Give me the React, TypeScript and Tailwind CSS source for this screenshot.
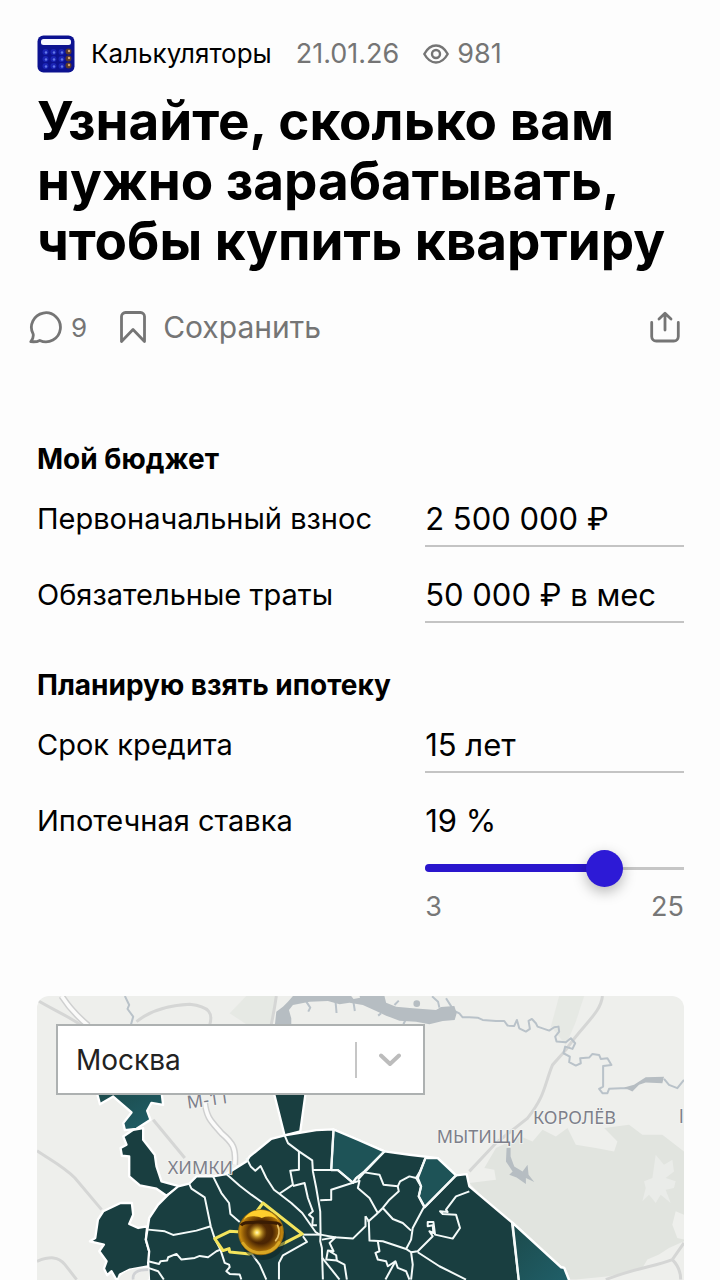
import { useState } from 'react';

const FONT = "font-['Inter','Noto_Sans',sans-serif]";

const CITIES = ['Москва', 'Санкт-Петербург', 'Казань', 'Екатеринбург'];

// District borders inside the city, drawn as plain polylines
const BORDERS = [
  // north-west
  '478,597 485,612 525,638 543,725 555,762 572,795 585,835 598,840 600,848 590,860 600,868 630,870 635,885',
  '355,735 405,740 430,751 500,738 543,725',
  '550,575 575,625 598,655 602,688 630,712',
  '590,568 630,603 665,630 700,655',
  '355,830 388,838 392,830 412,828 415,818 440,808 455,825 495,820 510,814 535,818 560,800 572,795',
  '355,850 385,860 402,885',
  '650,520 663,545 677,558 693,544 710,580 733,615 750,628 785,655 818,685 858,742 870,750',
  // north
  '765,452 775,475 808,500 848,527 850,560 860,610 872,680 873,750 872,770 877,790 878,825 880,885',
  '808,500 808,555 782,558 790,600 748,628',
  '790,604 825,595 835,640 850,680 838,690 850,700 848,722 862,722',
  '850,556 925,556 970,594 905,615 905,645 872,647',
  '912,434 905,555',
  '970,594 990,588 985,610 1020,640 1045,685',
  '1008,695 1008,725 970,762 915,758 873,750',
  '980,580 1010,558 1065,500',
  '985,585 1005,563 1050,570 1062,600 1105,605 1112,590 1140,575 1160,580 1172,560 1188,520',
  '1105,605 1108,620 1080,645 1060,670 1045,685',
  '1160,580 1175,605 1168,635 1185,665 1150,730 1145,765 1130,793',
  '1060,670 1090,703 1120,715 1145,738',
  '1280,572 1185,668',
  '1045,685 1015,712',
  // centre
  '820,750 873,750',
  '1008,695 1018,710 1020,768 1060,770 1130,793 1145,803 1150,840 1145,885',
  '1045,770 1050,800 1038,805 1045,825 1070,830 1075,845 1098,830 1105,850 1130,860 1140,885',
  '1098,830 1068,885',
  '1145,803 1165,800 1210,755 1200,740 1212,745 1210,722 1195,725 1195,712 1212,712 1217,750 1270,762 1292,730 1280,690 1240,688 1232,680 1255,682 1250,675 1280,635 1320,620',
  '1165,803 1230,845 1310,885',
  '877,765 918,758 900,775 912,800 895,798 890,825 922,828 920,812 900,800',
  '922,828 945,840 952,885',
  '878,820 930,885',
  '820,755 832,772 760,812 748,835 748,885',
  '660,800 690,840 710,885',
  '1448,715 1468,885',
];

const ROADS = [
  'M21 45 C70 75 110 90 160 125',
  'M320 110 C370 70 430 60 480 58 C540 65 550 85 540 120',
  'M21 498 C60 525 100 545 135 580 L215 675',
  'M21 830 C60 815 85 815 105 840 L140 885',
  'M370 405 L465 520',
  'M740 33 Q735 70 725 118',
  'M1720 33 C1715 85 1660 120 1610 195 L1570 240 C1545 300 1550 330 1495 400 L1400 475 L1320 560',
  'M1730 885 C1820 850 1880 845 1930 825 L1965 775 M1930 825 Q1955 850 1955 885',
];

const HIGHWAY = 'M95 33Q125 80 175 122M525 350C530 400 545 410 575 445C610 475 620 490 615 540';

function EyeIcon() {
  return (
    <svg viewBox="0 0 26 20" className="h-5 w-[26px]" fill="none" stroke="currentColor" strokeWidth="2.4" aria-hidden="true">
      <path d="M1.3 10C4.3 4.5 8.3 1.5 13 1.5S21.7 4.5 24.7 10C21.7 15.5 17.7 18.5 13 18.5S4.3 15.5 1.3 10Z" strokeLinejoin="round" />
      <circle cx="13" cy="10" r="4" />
    </svg>
  );
}

function CommentIcon() {
  return (
    <svg viewBox="0 0 34 34" className="size-[34px]" fill="none" stroke="currentColor" strokeWidth="2.8" strokeLinejoin="round" strokeLinecap="round" aria-hidden="true">
      <path d="M4.2 24.2A14.5 14.5 0 1 1 10.8 30.4C8.500 31.6 5.500 32 1.800 31.6C3.600 29.600 4.600 27.200 4.200 24.200Z" />
    </svg>
  );
}

function BookmarkIcon() {
  return (
    <svg viewBox="0 0 28 34" className="h-[34px] w-7" fill="none" stroke="currentColor" strokeWidth="2.8" strokeLinejoin="round" aria-hidden="true">
      <path d="M2.5 31.5V6.5A4 4 0 0 1 6.5 2.5H21.5A4 4 0 0 1 25.5 6.5V31.5L14 19.5Z" />
    </svg>
  );
}

function ShareIcon() {
  return (
    <svg viewBox="0 0 30 32" className="h-8 w-[30px]" fill="none" stroke="currentColor" strokeWidth="2.8" strokeLinecap="round" strokeLinejoin="round" aria-hidden="true">
      <path d="M1.7 11.5V25.5A4.5 4.5 0 0 0 6.2 30H23.8A4.5 4.5 0 0 0 28.3 25.5V11.5" />
      <path d="M15 19V2.5M9 8L15 2.2L21 8" />
    </svg>
  );
}

function CalculatorLogo() {
  const rows = [17, 24, 31];
  const cols = [9, 17, 25];
  return (
    <svg viewBox="0 0 38 38" className="size-[38px]" aria-hidden="true">
      <rect x="0.5" y="0.5" width="37" height="37" rx="6" fill="#0c1290" />
      <rect x="4" y="4" width="30" height="6" rx="2.5" fill="#f7f8ff" />
      {rows.map(y => (
        <g key={y}>
          {cols.map(x => (
            <g key={x}>
              <circle cx={x - 0.5} cy={y} r="3" fill="#1b25b5" />
              <circle cx={x} cy={y + 0.5} r="1.2" fill="#6278e8" />
            </g>
          ))}
          <circle cx="31.5" cy={y - 0.5} r="3" fill="#5b3a2a" />
          <circle cx="32" cy={y - 1} r="1.2" fill="#d3a372" />
        </g>
      ))}
    </svg>
  );
}

function Field({ id, label, defaultValue }: { id: string; label: string; defaultValue: string }) {
  return (
    <div className="grid grid-cols-[3fr_2fr] items-center">
      <label htmlFor={id} className="text-[29px] leading-9">{label}</label>
      <input
        id={id}
        type="text"
        defaultValue={defaultValue}
        className="h-14 w-full min-w-0 border-b-2 border-[#c4c4c4] bg-transparent text-[31px] outline-none"
      />
    </div>
  );
}

function RateSlider() {
  const [rate, setRate] = useState(19);
  const min = 3;
  const max = 25;
  const percent = ((rate - min) / (max - min)) * 100;

  return (
    <div className="grid grid-cols-[3fr_2fr]">
      <label htmlFor="rate" className="flex h-14 items-center text-[29px] leading-9">Ипотечная ставка</label>
      <div>
        <output htmlFor="rate" className="flex h-14 items-center text-[31px]">{rate} %</output>
        <div className="grid items-center">
          <div className="col-start-1 row-start-1 h-[3px] bg-[#c6c6c6]" />
          <div className="col-start-1 row-start-1 h-2 rounded-full bg-[#2a16cd]" style={{ width: `${percent}%` }} />
          <input
            id="rate"
            type="range"
            min={min}
            max={max}
            value={rate}
            onChange={e => setRate(Number(e.target.value))}
            className="col-start-1 row-start-1 h-[38px] w-full appearance-none bg-transparent [&::-webkit-slider-thumb]:size-[37px] [&::-webkit-slider-thumb]:appearance-none [&::-webkit-slider-thumb]:rounded-full [&::-webkit-slider-thumb]:bg-[#2d1ad6] [&::-webkit-slider-thumb]:shadow-[0_5px_14px_rgba(0,0,0,0.28)]"
          />
        </div>
        <div className="flex justify-between text-[27px] leading-10 text-[#777]">
          <span>{min}</span>
          <span>{max}</span>
        </div>
      </div>
    </div>
  );
}

function GoldBall() {
  return (
    <g>
      <ellipse cx="700" cy="760" rx="68" ry="66" fill="#0c2020" opacity="0.45" />
      <circle cx="694" cy="743" r="69" fill="url(#gold)" />
      <path d="M642 706C655 690 680 694 696 700C716 692 738 696 747 710C738 690 720 677 694 676C668 677 650 688 642 706Z" fill="#ffcf2e" />
      <path d="M634 722C644 708 668 716 694 712C720 716 744 708 754 724" fill="none" stroke="#3a1c03" strokeWidth="9" />
      <path d="M640 776C655 798 676 805 694 804C716 804 736 794 748 774" fill="none" stroke="#d8a624" strokeWidth="9" strokeLinecap="round" />
      <path d="M744 722C752 738 748 758 738 768" fill="none" stroke="#e9c26a" strokeWidth="5" strokeLinecap="round" />
      <circle cx="682" cy="744" r="30" fill="url(#glint)" />
    </g>
  );
}

function CityMap() {
  return (
    <svg viewBox="21 33 1944 852" className="block h-auto w-full bg-[#eeefec]" role="img" aria-label="Карта Москвы">
      <defs>
        <radialGradient id="gold">
          <stop offset="0" stopColor="#5a3204" />
          <stop offset="0.5" stopColor="#4a2403" />
          <stop offset="0.75" stopColor="#8f5a06" />
          <stop offset="0.92" stopColor="#c4880f" />
          <stop offset="1" stopColor="#8a6410" />
        </radialGradient>
        <radialGradient id="glint">
          <stop offset="0" stopColor="#fffbc8" />
          <stop offset="0.25" stopColor="#f4cf4a" />
          <stop offset="1" stopColor="#a86f08" stopOpacity="0" />
        </radialGradient>
        <linearGradient id="teal" x1="0" y1="0" x2="1" y2="1">
          <stop offset="0" stopColor="#1c4a4b" />
          <stop offset="1" stopColor="#20606a" />
        </linearGradient>
      </defs>

      {/* forests */}
      <g fill="#e1e4df">
        <path d="M1320 595L1400 585L1395 555L1365 550L1400 490L1475 455L1510 470L1540 435L1580 455L1615 430L1640 480L1700 490L1755 500L1765 470L1725 430L1800 420L1840 450L1900 450L1965 500V770L1920 790L1890 810L1855 825L1840 850L1740 875L1640 885H1600Z" />
        <path d="M1590 33H1665L1640 110L1610 180L1565 125Z" opacity="0.6" />
        <path d="M600 85L650 33H740L725 118H650Z" opacity="0.6" />
      </g>
      <path d="M1880 510L1905 540L1930 525L1935 560L1910 580L1940 590L1935 610L1910 615L1925 655L1895 630L1880 655L1860 630L1840 650L1850 610L1845 590L1870 580Z" fill="#eaece9" />
      <path d="M1965 690L1940 680L1930 720L1945 760L1965 765Z" fill="#eeefec" />

      {/* roads */}
      <g fill="none" stroke="#d5d6d5" strokeWidth="9">
        {ROADS.map(d => <path key={d} d={d} />)}
      </g>
      <path d={HIGHWAY} fill="none" stroke="#cfd0d0" strokeWidth="20" />
      <path d={HIGHWAY} fill="none" stroke="#fbfbfa" strokeWidth="11" />

      {/* water */}
      <g fill="none" stroke="#b9c2c9" strokeWidth="6" strokeLinejoin="round">
        <path d="M285 33L298 60L293 72L310 95L303 120" />
        <path d="M1275 78L1290 85L1300 97L1320 97L1345 98L1360 105L1400 108L1425 108L1435 122L1455 123L1463 105L1470 130L1490 140L1502 132L1498 108L1508 102L1520 115L1525 125L1560 137L1575 127L1588 125L1590 140L1578 155L1582 170L1610 172L1625 160L1638 175L1630 192L1608 185L1603 205L1622 215L1620 232L1640 242L1655 235L1653 220L1680 218L1690 207L1710 210L1715 222L1735 220L1747 240L1722 243L1722 305L1710 312L1720 325L1735 325L1740 312L1775 310L1800 310M1905 282L1920 300L1945 310L1965 285" />
        <path d="M830 50L842 68L836 80M918 50L921 84M972 52L976 78M1095 60L1108 47M1230 68L1226 50L1208 34M1268 68L1250 40M1055 85L1046 92M1128 105L1122 118" />
      </g>
      <g fill="#b6bdc2">
        <path d="M1785 308L1815 300L1850 277L1905 276L1900 295L1850 293L1830 300L1810 320Z" />
        <path d="M736 118L740 80L760 65L775 50L790 33H965L972 42L992 38L990 33H1065L1070 53L1100 65L1150 70L1220 75L1235 66L1275 63L1282 85L1276 105L1240 108L1200 118L1160 110L1110 107L1070 92L1040 78L1000 60L960 53L930 58L895 48L840 50L790 60L778 75L785 100V118Z" />
        <circle cx="1162" cy="56" r="10" />
        <path d="M1432 490H1444V515L1455 545L1480 560L1495 540L1498 570L1515 592L1490 580V598L1462 578L1440 570L1450 560L1430 530Z" />
      </g>

      {/* city area */}
      <g fill="#193e40" stroke="#fff" strokeWidth="7" strokeLinejoin="round">
        <path d="M200 320H395L400 360L365 354L352 378L362 405L320 432L285 436L280 415L305 383L250 335L210 358Z" fill="url(#teal)" />
        <path d="M340 430V465L375 510L380 545L395 590L450 605L410 633L380 612L330 602L298 575V515L276 513L272 490L290 480L280 455L310 435Z" />
        <path d="M220 680L272 655H306L310 690L298 718L325 730L352 725L348 765L358 800V845L300 855L270 870L262 890L245 860L232 872L222 852L230 830L208 800L222 780L180 770L196 760L204 705Z" />
        <path d="M733 325H828L812 440L765 452Z" />
        <path d="M358 900L355 835L358 800L348 765L358 700L385 660L415 630L445 605L478 597L500 575H550L590 568L650 530L660 515L725 462L765 452L860 436L912 434L985 465L1065 500L1140 510L1225 520L1280 572L1312 568L1320 605L1450 715L1595 848L1605 850L1625 900Z" />
        <path d="M912 434L985 465L1065 500L1005 560L980 580L970 594L925 556H905Z" fill="#1e5357" />
        <path d="M1188 520H1225L1280 572L1185 668L1168 635L1175 605L1165 580Z" fill="#1e5357" />
        <path d="M1450 715L1595 848L1605 850L1625 900H1470Z" fill="url(#teal)" />
      </g>
      <g fill="none" stroke="#f4faf9" strokeWidth="6" strokeLinejoin="round">
        {BORDERS.map(points => <polyline key={points} points={points} />)}
      </g>
      <path d="M265 885C275 865 300 848 357 850V885Z" fill="#eeefec" />
      <path d="M310 885Q305 855 355 855" fill="none" stroke="#d0d2d5" strokeWidth="8" />

      {/* selected district */}
      <path d="M700 655L818 748L755 780L660 808L600 802L598 792L580 798L555 762L600 740L635 742Z" fill="#193e40" stroke="#f3e45c" strokeWidth="9" strokeLinejoin="round" />
      <GoldBall />

      <g className="font-['Noto_Sans',sans-serif]" fill="#7d7f8a" stroke="#f3f4f2" strokeWidth="5" paintOrder="stroke" fontSize="54">
        <text x="474" y="372" transform="rotate(-8 474 372)">М-11</text>
        <text x="414" y="568">ХИМКИ</text>
        <text x="1222" y="474">МЫТИЩИ</text>
        <text x="1511" y="418">КОРОЛЁВ</text>
        <text x="1950" y="416">l</text>
      </g>
    </svg>
  );
}

export default function App() {
  return (
    <main className={`min-h-screen bg-[#fdfdfd] pt-[35px] pr-9 pl-[37px] text-black ${FONT}`}>
      <header>
        <div className="flex items-center text-[27px] leading-[38px] text-[#757575]">
          <a href="#calculators" className="flex items-center gap-4 text-[26px] text-black">
            <CalculatorLogo />
            Калькуляторы
          </a>
          <time dateTime="2026-01-21" className="ml-6">21.01.26</time>
          <span className="ml-6 flex items-center gap-2">
            <EyeIcon />
            981
          </span>
        </div>
        <h1 className="mt-[18px] text-[53px] leading-[60px] font-bold">
          Узнайте, сколько вам нужно зарабатывать, чтобы купить квартиру
        </h1>
        <div className="mt-9 flex items-center text-[#757575]">
          <button type="button" className="-ml-2 flex items-center gap-2 text-[26px]" aria-label="Комментарии: 9">
            <CommentIcon />
            9
          </button>
          <button type="button" className="ml-8 flex items-center gap-4 text-[30px] leading-10">
            <BookmarkIcon />
            Сохранить
          </button>
          <button type="button" className="ml-auto pr-1" aria-label="Поделиться">
            <ShareIcon />
          </button>
        </div>
      </header>

      <form onSubmit={e => e.preventDefault()}>
        <section className="mt-[94px]">
          <h2 className="mb-[14px] text-[28px] leading-9 font-bold">Мой бюджет</h2>
          <div className="flex flex-col gap-5">
            <Field id="deposit" label="Первоначальный взнос" defaultValue="2 500 000 ₽" />
            <Field id="expenses" label="Обязательные траты" defaultValue="50 000 ₽ в мес" />
          </div>
        </section>

        <section className="mt-11">
          <h2 className="mb-[14px] text-[28px] leading-9 font-bold">Планирую взять ипотеку</h2>
          <div className="flex flex-col gap-5">
            <Field id="term" label="Срок кредита" defaultValue="15 лет" />
            <RateSlider />
          </div>
        </section>
      </form>

      <section className="relative mt-[69px] overflow-hidden rounded-t-xl">
        <CityMap />
        <div className="absolute top-7 left-[19px] h-[71px] w-[57%] border-2 border-[#adb1b1] bg-white">
          <select
            aria-label="Город"
            defaultValue="Москва"
            className="size-full appearance-none bg-transparent pl-[18px] text-[28px] text-[#222] outline-none"
          >
            {CITIES.map(city => <option key={city}>{city}</option>)}
          </select>
          <div className="pointer-events-none absolute inset-y-0 right-0 flex w-[68px] items-center">
            <span className="h-9 w-[2px] bg-[#c6c6c6]" />
            <svg viewBox="0 0 22 14" className="mx-auto h-[14px] w-[22px]" fill="none" stroke="#bcbcbc" strokeWidth="4" strokeLinecap="round" strokeLinejoin="round" aria-hidden="true">
              <path d="M2 2.5L11 11L20 2.5" />
            </svg>
          </div>
        </div>
      </section>
    </main>
  );
}
